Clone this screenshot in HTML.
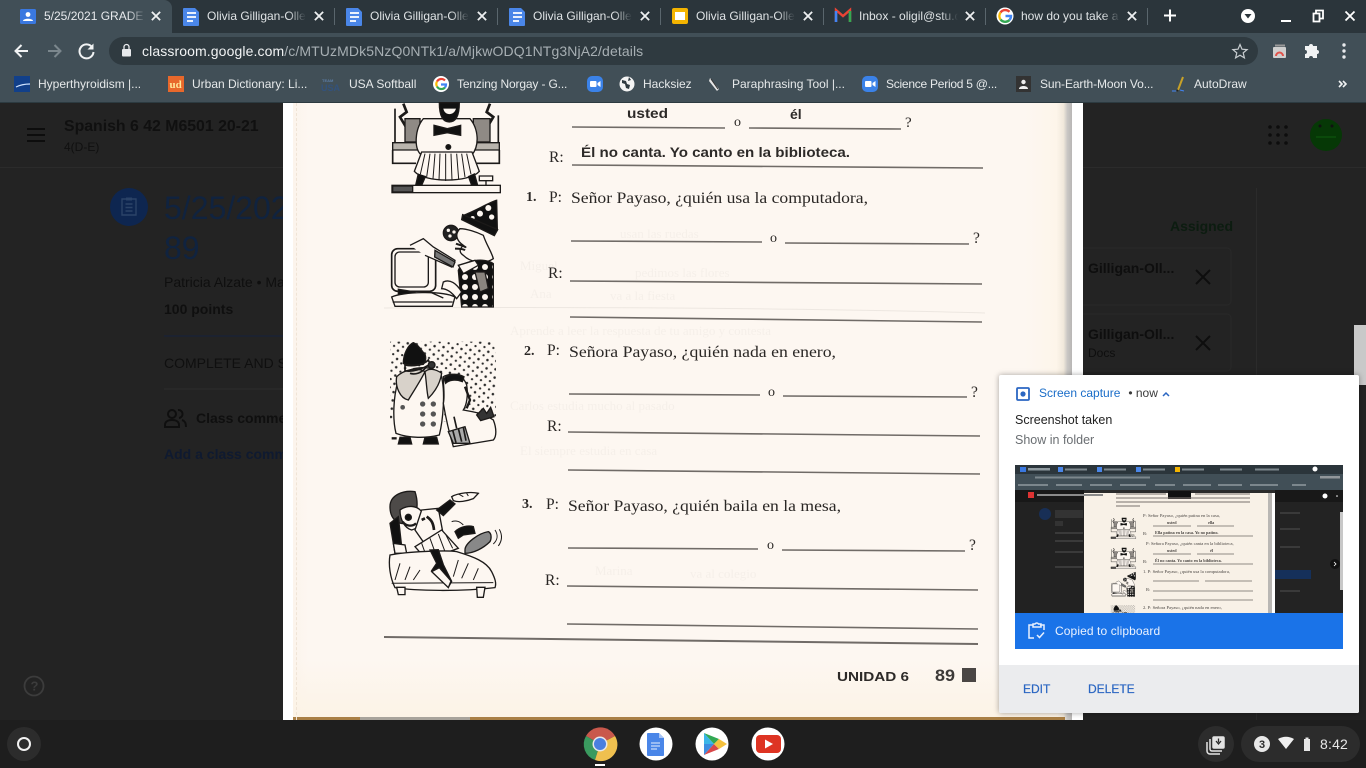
<!DOCTYPE html>
<html lang="en"><head><meta charset="utf-8"><title>Classroom</title>
<style>
*{box-sizing:border-box}
html,body{margin:0;padding:0;width:1366px;height:768px;overflow:hidden;background:#232323;font-family:"Liberation Sans",sans-serif}
.a{position:absolute;white-space:nowrap}
.t{position:absolute;top:9px;font-size:12px;line-height:14px;color:#dfe3e5;white-space:nowrap;overflow:hidden;-webkit-mask-image:linear-gradient(90deg,#000 82%,transparent 100%);mask-image:linear-gradient(90deg,#000 82%,transparent 100%)}
.b{position:absolute;top:77px;font-size:12px;line-height:14px;color:#e6e9ea;white-space:nowrap}
.sep{position:absolute;top:8px;width:1px;height:17px;background:#5a666d}
svg{position:absolute;overflow:visible}
</style></head>
<body>
<!-- browser chrome -->
<div class="a" style="left:0;top:0;width:1366px;height:33px;background:#2b353b"></div>
<div class="a" style="left:0;top:0;width:172px;height:33px;background:#414f57;border-radius:0 8px 0 0"></div>
<div class="a" style="left:0;top:33px;width:1366px;height:69px;background:#414f57"></div>
<div class="a" style="left:109px;top:37px;width:1149px;height:28px;background:#2f3a40;border-radius:14px"></div>

<svg style="left:0;top:0" width="1366" height="102" viewBox="0 0 1366 102">
 <rect x="20" y="9" width="16" height="15" rx="1.5" fill="#3a78e0"/><circle cx="28" cy="14.5" r="2.4" fill="#fff"/><path d="M23 21c0-3 10-3 10 0z" fill="#fff"/>
 <path d="M184 8h11l4 4v13a1 1 0 0 1-1 1h-14a1 1 0 0 1-1-1V9a1 1 0 0 1 1-1z" fill="#4a86e8"/><path d="M187 13h9M187 17h9M187 21h6" stroke="#fff" stroke-width="1.7"/>
 <g transform="translate(163 0)"><path d="M184 8h11l4 4v13a1 1 0 0 1-1 1h-14a1 1 0 0 1-1-1V9a1 1 0 0 1 1-1z" fill="#4a86e8"/><path d="M187 13h9M187 17h9M187 21h6" stroke="#fff" stroke-width="1.7"/></g>
 <g transform="translate(326 0)"><path d="M184 8h11l4 4v13a1 1 0 0 1-1 1h-14a1 1 0 0 1-1-1V9a1 1 0 0 1 1-1z" fill="#4a86e8"/><path d="M187 13h9M187 17h9M187 21h6" stroke="#fff" stroke-width="1.7"/></g>
 <rect x="672" y="8" width="16" height="16" rx="2" fill="#f4b400"/><rect x="675" y="12" width="10" height="8" fill="#fff"/>
 <path d="M836 22V10l7 6 7-6v12" fill="none" stroke="#ea4335" stroke-width="2.4"/><path d="M836 22V11" stroke="#4285f4" stroke-width="2.6"/><path d="M850 22V11" stroke="#34a853" stroke-width="2.6"/>
 <circle cx="1005" cy="16" r="8.500" fill="#fff"/>
 <g fill="none" stroke-width="2.400"><path d="M1009.500 11.800a6 6 0 0 0-9 .7" stroke="#ea4335"/><path d="M1000.500 12.500a6 6 0 0 0 0 7" stroke="#fbbc05"/><path d="M1000.500 19.500a6 6 0 0 0 9 .5" stroke="#34a853"/><path d="M1009.500 20a6 6 0 0 0 1.500-4h-5.500" stroke="#4285f4"/></g>
 <g stroke="#eef0f1" stroke-width="1.800" fill="none" stroke-linecap="square">
  <path d="M152.500 12.500l7 7M159.500 12.500l-7 7"/><path d="M315.500 12.500l7 7M322.500 12.500l-7 7"/><path d="M478.500 12.500l7 7M485.500 12.500l-7 7"/><path d="M641.500 12.500l7 7M648.500 12.500l-7 7"/><path d="M804.500 12.500l7 7M811.500 12.500l-7 7"/><path d="M966.500 12.500l7 7M973.500 12.500l-7 7"/><path d="M1128.500 12.500l7 7M1135.500 12.500l-7 7"/>
 </g>
 <path d="M1170 9.500v12M1164 15.500h12" stroke="#fff" stroke-width="2"/>
 <circle cx="1248" cy="16" r="7" fill="#fff"/><path d="M1244.500 14h7l-3.500 4.500z" fill="#2b353b"/>
 <path d="M1281 21h10" stroke="#fff" stroke-width="2"/>
 <path d="M1313.500 13.500h6v8h-6zM1316 13v-2.500h7v8h-3" fill="none" stroke="#fff" stroke-width="1.800"/>
 <path d="M1345.500 11.500l9 9M1354.500 11.500l-9 9" stroke="#fff" stroke-width="1.800"/>
 <path d="M28 51H16M21.500 45l-6 6 6 6" fill="none" stroke="#f1f3f4" stroke-width="2"/>
 <path d="M48 51h12M54.500 45l6 6-6 6" fill="none" stroke="#7b878d" stroke-width="2"/>
 <path d="M92 47a7 7 0 1 0 1.500 5" fill="none" stroke="#f1f3f4" stroke-width="2"/><path d="M93.500 43.500v6h-6z" fill="#f1f3f4"/>
 <rect x="122" y="49" width="9" height="7.500" rx="1" fill="#e8eaed"/><path d="M124 49v-2a2.500 2.500 0 0 1 5 0v2" fill="none" stroke="#e8eaed" stroke-width="1.300"/>
 <path d="M1240 44.500l2 4.700 5.100.4-3.900 3.300 1.200 5-4.400-2.700-4.400 2.700 1.200-5-3.900-3.300 5.100-.4z" fill="none" stroke="#c8cdd0" stroke-width="1.200"/>
 <rect x="1273" y="47" width="13" height="11" rx="1" fill="#cfcfcf"/><rect x="1275" y="44.500" width="10" height="2" fill="#9a9a9a"/><path d="M1276 56a3.500 3.500 0 0 1 7 0" fill="none" stroke="#e0524a" stroke-width="2"/>
 <path d="M1305 47h4a2 2 0 0 1 4 0h4v4a2 2 0 0 1 0 4v4h-4a2 2 0 0 0-4 0h-4v-4a2 2 0 0 0 0-4z" fill="#f1f3f4" transform="translate(0 -1)"/>
 <g fill="#e8eaed"><circle cx="1344" cy="45" r="1.700"/><circle cx="1344" cy="51" r="1.700"/><circle cx="1344" cy="57" r="1.700"/></g>
 <rect x="14" y="76" width="16" height="16" fill="#12408a"/><path d="M16 87c4-2 8-3 14-3" stroke="#cfe3ff" stroke-width="1.200" fill="none"/>
 <rect x="168" y="76" width="16" height="16" fill="#e8682b"/><text x="169.500" y="88" font-family="Liberation Serif" font-weight="700" font-size="11" fill="#ffe79a">ud</text>
 <text x="322" y="82" font-size="4" fill="#5c7ea8" font-weight="700">TEAM</text><text x="321" y="91" font-size="9" font-weight="700" fill="#33527c">USA</text>
 <circle cx="441" cy="84" r="8" fill="#fff"/><g fill="none" stroke-width="2.200"><path d="M445 80.500a5 5 0 0 0-8 1" stroke="#ea4335"/><path d="M437 81.500a5 5 0 0 0 0 5" stroke="#fbbc05"/><path d="M437 86.500a5 5 0 0 0 8 1" stroke="#34a853"/><path d="M445 87.500a5 5 0 0 0 1-3h-5" stroke="#4285f4"/></g>
 <rect x="587" y="76" width="16" height="16" rx="5" fill="#3b82e8"/><rect x="590" y="81" width="6.500" height="6" rx="1" fill="#fff"/><path d="M597.500 83l3-2v6l-3-2z" fill="#fff"/>
 <circle cx="627" cy="84" r="7.500" fill="#f4f4f4"/><path d="M622 80l4 1 1 3 3 1-1 4-3-1-1-4-3-1zM629 77l2 3-3 1z" fill="#2f3a40"/>
 <path d="M710 78l9 11-2 2-8-10z" fill="#e6e6e6"/><path d="M711 79l7 10" stroke="#333" stroke-width="1"/>
 <rect x="862" y="76" width="16" height="16" rx="5" fill="#3b82e8"/><rect x="865" y="81" width="6.500" height="6" rx="1" fill="#fff"/><path d="M872.500 83l3-2v6l-3-2z" fill="#fff"/>
 <rect x="1016" y="76" width="15" height="16" fill="#333"/><circle cx="1023.500" cy="82" r="2.200" fill="#eee"/><path d="M1019 89c0-4 9-4 9 0z" fill="#eee"/>
 <path d="M1178 90l5-13" stroke="#c9a227" stroke-width="2"/><path d="M1172 91h4M1180 90l4 1" stroke="#4285f4" stroke-width="1"/><path d="M1177 91l1-1" stroke="#222" stroke-width="2"/>
 <path d="M1339 81l3 3-3 3M1343 81l3 3-3 3" fill="none" stroke="#f1f3f4" stroke-width="1.600"/>
</svg>
<div class="t" style="left:44px;width:102px;color:#e8eaed">5/25/2021 GRADE GRADE</div>
<div class="t" style="left:207px;width:99px">Olivia Gilligan-Ollero</div>
<div class="t" style="left:370px;width:99px">Olivia Gilligan-Ollero</div>
<div class="t" style="left:533px;width:99px">Olivia Gilligan-Ollero</div>
<div class="t" style="left:696px;width:99px">Olivia Gilligan-Ollero</div>
<div class="t" style="left:859px;width:99px">Inbox - oligil@stu.com</div>
<div class="t" style="left:1021px;width:99px">how do you take a screenshot</div>
<div class="sep" style="left:334px"></div><div class="sep" style="left:497px"></div><div class="sep" style="left:660px"></div><div class="sep" style="left:823px"></div><div class="sep" style="left:985px"></div><div class="sep" style="left:1147px"></div>
<div class="a" style="left:142px;top:43px;font-size:14px;line-height:16px;color:#f1f3f4;letter-spacing:.11px">classroom.google.com<span style="color:#a7afb3">/c/MTUzMDk5NzQ0NTk1/a/MjkwODQ1NTg3NjA2/details</span></div>
<div class="b" style="left:38px">Hyperthyroidism |...</div>
<div class="b" style="left:192px">Urban Dictionary: Li...</div>
<div class="b" style="left:349px">USA Softball</div>
<div class="b" style="left:457px;letter-spacing:-.15px">Tenzing Norgay - G...</div>
<div class="b" style="left:643px">Hacksiez</div>
<div class="b" style="left:732px">Paraphrasing Tool |...</div>
<div class="b" style="left:886px;letter-spacing:-.25px">Science Period 5 @...</div>
<div class="b" style="left:1040px;letter-spacing:-.1px">Sun-Earth-Moon Vo...</div>
<div class="b" style="left:1194px">AutoDraw</div>

<!-- dimmed classroom -->
<div class="a" style="left:0;top:102px;width:1366px;height:618px;background:#232323"></div>
<div class="a" style="left:0;top:102px;width:1366px;height:1px;background:#2c3a40"></div>
<div class="a" style="left:0;top:167px;width:1366px;height:1px;background:#2b2b2b"></div>
<div class="a" style="left:1256px;top:188px;width:1px;height:532px;background:#2b2b2b"></div>
<svg style="left:0;top:102px" width="1366" height="618" viewBox="0 102 1366 618">
 <path d="M27 129h18M27 135h18M27 141h18" stroke="#0d0d0d" stroke-width="2"/>
 <circle cx="129" cy="207" r="19" fill="#0e2650"/>
 <path d="M122 199h14v16h-14zM125.500 204h7M125.500 207.500h7M125.500 211h7" fill="none" stroke="#2b4368" stroke-width="1.400"/><rect x="126" y="197.500" width="6" height="3" fill="#2b4368"/>
 <path d="M164 336h119" stroke="#16203e" stroke-width="1"/><path d="M164 389h119" stroke="#2c2c2c"/>
 <g fill="none" stroke="#0f0f0f" stroke-width="2"><circle cx="172" cy="414" r="4"/><path d="M165 427v-2c0-4 4-5 7-5s7 1 7 5v2zM178 410a4 4 0 0 1 1 8M182 420c3 1 4 3 4 7"/></g>
 <g fill="#0d0d0d"><circle cx="1270" cy="127" r="1.800"/><circle cx="1278" cy="127" r="1.800"/><circle cx="1286" cy="127" r="1.800"/><circle cx="1270" cy="135" r="1.800"/><circle cx="1278" cy="135" r="1.800"/><circle cx="1286" cy="135" r="1.800"/><circle cx="1270" cy="143" r="1.800"/><circle cx="1278" cy="143" r="1.800"/><circle cx="1286" cy="143" r="1.800"/></g>
 <circle cx="1326" cy="135" r="16" fill="#063806"/><circle cx="1320" cy="126" r="1.500" fill="#111"/><circle cx="1332" cy="126" r="1.500" fill="#111"/><path d="M1316 137h20" stroke="#0a4a0a" stroke-width="2"/>
 <rect x="1070" y="248" width="161" height="57" rx="4" fill="none" stroke="#292929"/>
 <rect x="1070" y="314" width="161" height="57" rx="4" fill="none" stroke="#292929"/>
 <path d="M1196 270l14 14M1210 270l-14 14M1196 336l14 14M1210 336l-14 14" stroke="#0e0e0e" stroke-width="2"/>
 <circle cx="34" cy="686" r="9.500" fill="none" stroke="#3c3c3c" stroke-width="1.800"/>
 <text x="30.500" y="690.500" font-size="13" font-weight="700" fill="#3c3c3c">?</text>
 <rect x="1354" y="325" width="12" height="60" fill="#c9c9c9"/>
</svg>
<div class="a" style="left:64px;top:118px;font-size:16px;line-height:18px;font-weight:700;color:#101010;transform:scaleX(.99);transform-origin:0 0">Spanish 6 42 M6501 20-21</div>
<div class="a" style="left:64px;top:140px;font-size:12px;line-height:14px;color:#101010">4(D-E)</div>
<div class="a" style="left:164px;top:190px;font-size:32px;line-height:36px;color:#10233f">5/25/2021</div>
<div class="a" style="left:164px;top:230px;font-size:32px;line-height:36px;color:#10233f">89</div>
<div class="a" style="left:164px;top:274px;font-size:14px;line-height:16px;color:#0f0f0f">Patricia Alzate • May 25</div>
<div class="a" style="left:164px;top:301px;font-size:14px;line-height:16px;font-weight:700;color:#0f0f0f">100 points</div>
<div class="a" style="left:164px;top:355px;font-size:14px;line-height:16px;color:#0f0f0f">COMPLETE AND SUBMIT</div>
<div class="a" style="left:196px;top:410px;font-size:14px;line-height:16px;font-weight:700;color:#0f0f0f">Class comments</div>
<div class="a" style="left:164px;top:446px;font-size:14px;line-height:16px;font-weight:700;color:#0f1a30">Add a class comment</div>
<div class="a" style="left:1170px;top:217px;font-size:14px;line-height:18px;font-weight:700;color:#0c1c10">Assigned</div>
<div class="a" style="left:1088px;top:260px;font-size:14px;line-height:16px;font-weight:700;color:#0e0e0e">Gilligan-Oll...</div>
<div class="a" style="left:1088px;top:326px;font-size:14px;line-height:16px;font-weight:700;color:#0e0e0e">Gilligan-Oll...</div>
<div class="a" style="left:1088px;top:346px;font-size:12px;line-height:14px;color:#0e0e0e">Docs</div>

<!-- document page -->
<div class="a" style="left:283px;top:103px;width:800px;height:617px;background:#fff"></div>
<div class="a" style="left:293px;top:103px;width:779px;height:617px;background:linear-gradient(90deg,#fcf4ec 0,#fdf7f1 2%,#fdf7f1 94%,#fdf5ea 98%,#f1e9dc 98.9%,#c9c7c4 99.4%,#b8b6b5 100%)"></div>
<div class="a" style="left:293px;top:660px;width:764px;height:57px;background:linear-gradient(180deg,transparent,#fcf3e6)"></div>
<div class="a" style="left:293px;top:717px;width:772px;height:3px;background:#a97f45"></div>
<div class="a" style="left:360px;top:717px;width:110px;height:3px;background:#a8a39b"></div>
<div class="a" style="left:296px;top:103px;width:0;height:617px;border-left:1px dashed #f0e4d6"></div>

<svg style="left:283px;top:103px" width="800" height="617" viewBox="283 103 800 617">
 <defs>
  <pattern id="snow" width="27" height="25" patternUnits="userSpaceOnUse" patternTransform="rotate(6)"><circle cx="6" cy="6" r="3.800" fill="#2a2a2a"/><circle cx="20" cy="18" r="3.400" fill="#2a2a2a"/></pattern>
  <pattern id="pd" width="30" height="30" patternUnits="userSpaceOnUse"><rect width="30" height="30" fill="#111"/><circle cx="15" cy="15" r="9" fill="#fdf7f1"/></pattern>
 </defs>
 <!-- faint bleed-through -->
 <g font-family="Liberation Serif" font-size="13" fill="#9a938a" opacity=".07">
  <text x="520" y="270">Miguel</text><text x="620" y="238">usan las ruedas</text><text x="635" y="277">pedimos las flores</text>
  <text x="530" y="298">Ana</text><text x="610" y="300">va a la fiesta</text><text x="510" y="335">Aprende a leer la respuesta de tu amigo y contesta</text>
  <text x="510" y="410">Carlos estudia mucho al pasado</text><text x="520" y="455">El siempre estudia en casa</text><text x="595" y="575">Marina</text><text x="690" y="578">va al colegio</text>
 </g>
 <path d="M384 308C640 306 880 310 985 313" stroke="#b8b0a8" stroke-width="1" fill="none" opacity=".22"/>
 <!-- lines -->
 <g stroke="#706b67" fill="none" stroke-width="1.600">
  <path d="M572 127l153 1M749 128l152 1M572 165l411 3"/>
  <path d="M571 241l191 1M785 243l184 1M570 281l412 3M570 317l412 5"/>
  <path d="M569 394l191 1M783 396l184 1M568 432l412 4M568 470l412 4"/>
  <path d="M568 548l190 1M782 550l183 1M567 586l411 4M567 624l411 5"/>
  <path d="M384 637l594 7" stroke-width="2"/>
 </g>
 <!-- print text -->
 <g font-family="Liberation Serif" font-size="15.500" fill="#2a2725">
  <text x="734" y="126" font-size="14">o</text><text x="905" y="127" font-size="15">?</text>
  <text x="549" y="162">R:</text>
  <text x="526" y="201" font-weight="700" font-size="14">1.</text><text x="549" y="202">P:</text><text x="571" y="203" textLength="297" lengthAdjust="spacingAndGlyphs">Señor Payaso, ¿quién usa la computadora,</text>
  <text x="770" y="242" font-size="14">o</text><text x="973" y="243">?</text><text x="548" y="278">R:</text>
  <text x="524" y="355" font-weight="700" font-size="14">2.</text><text x="547" y="355">P:</text><text x="569" y="357" textLength="267" lengthAdjust="spacingAndGlyphs">Señora Payaso, ¿quién nada en enero,</text>
  <text x="768" y="396" font-size="14">o</text><text x="971" y="397">?</text><text x="547" y="431">R:</text>
  <text x="522" y="508" font-weight="700" font-size="14">3.</text><text x="546" y="509">P:</text><text x="568" y="511" textLength="273" lengthAdjust="spacingAndGlyphs">Señor Payaso, ¿quién baila en la mesa,</text>
  <text x="767" y="549" font-size="14">o</text><text x="969" y="550">?</text><text x="545" y="585">R:</text>
  <text x="935" y="681" font-family="Liberation Sans" font-size="17" font-weight="700" fill="#3d3a38" textLength="20" lengthAdjust="spacingAndGlyphs">89</text>
 </g>
 <g font-family="Liberation Sans" font-weight="700" fill="#2d2a28">
  <text x="627" y="118" font-size="14" textLength="41" lengthAdjust="spacingAndGlyphs">usted</text><text x="790" y="119" font-size="14">él</text>
  <text x="581" y="157" font-size="13.500" textLength="269" lengthAdjust="spacingAndGlyphs">Él no canta. Yo canto en la biblioteca.</text>
  <text x="837" y="681" font-size="12.500" textLength="72" lengthAdjust="spacingAndGlyphs">UNIDAD 6</text>
 </g>
 <rect x="962" y="668" width="14" height="14" fill="#4a4644"/>

 <!-- clown 0 -->
 <g id="c0" transform="translate(380 102) scale(.3333)" fill="none" stroke="#1c1a19" stroke-width="4">
  <path d="M45 130V20M355 130V40" stroke-width="5"/>
  <path d="M70 5l10 25-20 15 18 30 25-15M330 5l-10 25 20 15-18 30-25-15" stroke-width="8"/>
  <rect x="75" y="50" width="45" height="70" fill="#8f8a85"/><rect x="280" y="50" width="50" height="70" fill="#8f8a85"/>
  <path d="M38 122h320v22H38z" fill="#b9b4ad"/><path d="M38 144v40h70M358 144v40h-70" stroke-width="5"/>
  <path d="M130 50c-25 30-30 90 -5 110h150c25-30 20-80-5-110z" fill="#fdf7f1"/>
  <path d="M178 2c0 40 10 58 30 58s30-20 30-58z" fill="#111"/><path d="M190 20c4 22 32 22 38 0z" fill="#fdf7f1" stroke="none"/>
  <path d="M162 70l40 10 40-10v30l-40-8-40 8z" fill="#111"/><circle cx="205" cy="135" r="7" fill="#111"/>
  <path d="M125 150l-22 58c30 35 165 35 195 0l-22-58z" fill="#fdf7f1"/>
  <path d="M135 155l-14 62M150 155l-10 70M165 155l-6 75M180 155l-3 80M197 155v82M213 155l3 80M230 155l6 76M245 155l10 70M260 155l13 62" stroke-width="3"/>
  <path d="M115 215l-8 35h18l12-28M265 222l10 28h18l-10-36" fill="#111"/>
  <rect x="36" y="250" width="325" height="22" fill="#fdf7f1"/><rect x="38" y="252" width="60" height="18" fill="#555"/>
  <path d="M298 222h40v14h-40zM318 236v14" stroke-width="4"/>
 </g>
 <!-- clown 1 -->
 <g id="c1" transform="translate(380 102) scale(.3333)" fill="none" stroke="#1c1a19" stroke-width="4">
  <path d="M250 340c30-10 80-40 100-45l2 85c-30-5-70-20-102-40z" fill="#111"/>
  <g fill="#fdf7f1" stroke="none"><circle cx="300" cy="335" r="9"/><circle cx="325" cy="318" r="9"/><circle cx="335" cy="345" r="8"/><circle cx="278" cy="348" r="6"/></g>
  <path d="M248 338l105 45-10 18-98-48z" fill="#111"/>
  <circle cx="213" cy="393" r="23" fill="#222"/><g fill="#fdf7f1" stroke="none"><circle cx="205" cy="385" r="5"/><circle cx="222" cy="390" r="5"/><circle cx="210" cy="402" r="5"/></g>
  <path d="M240 380c20 0 50 10 70 20 10 30 25 50 30 70-30 20-70 10-90-10-15-10-10-20 0-30-15-10-30-30-10-50z" fill="#fdf7f1"/>
  <path d="M228 425c10 5 25 5 30 12M225 440c10 0 25 0 30 5" stroke-width="6"/>
  <path d="M235 505c10-30 80-40 105-20v130H245z" fill="url(#pd)"/>
  <path d="M285 510l30 0 10 50-25 10z" fill="#8a857f"/>
  <path d="M235 490l50-15 10 15-45 25z" fill="#fdf7f1"/>
  <rect x="35" y="440" width="132" height="128" rx="18" fill="#fdf7f1" stroke-width="5"/><rect x="45" y="450" width="100" height="105" rx="14"/>
  <path d="M90 430l40-20 30 25 65 40-10 20-80-35" fill="#fdf7f1"/><path d="M165 445l60 35-6 15-55-30z" fill="#777"/>
  <path d="M55 562l50 8v12H55z" fill="#111"/>
  <path d="M35 585c30-15 150-20 190 0l-8 28H45z" fill="#fdf7f1"/><path d="M150 570l40 18M38 600h180"/>
  <path d="M190 540c20-10 40 5 55 30l-15 20c-15-20-30-30-45-30z" fill="#fdf7f1"/>
 </g>
 <!-- clown 2 -->
 <g id="c2" transform="translate(380 330) scale(.3333)" fill="none" stroke="#1c1a19" stroke-width="4">
  <rect x="30" y="35" width="318" height="240" fill="url(#snow)" stroke="none"/>
  <path d="M58 140c-20 60-20 130-10 170 40 15 90 15 130 5 10-40 20-130 5-180-20-30-90-30-125 5z" fill="#fdf7f1"/>
  <path d="M50 140c20-20 60-30 85-15-15 30-35 60-50 85-25-5-40-40-35-70zM185 130c-20-15-40-15-50-5 5 35 5 60 10 80 15-15 35-40 40-75z" fill="#d8d2ca"/>
  <g fill="#555" stroke="none"><circle cx="128" cy="222" r="8"/><circle cx="160" cy="222" r="8"/><circle cx="128" cy="252" r="8"/><circle cx="160" cy="252" r="8"/><circle cx="128" cy="282" r="8"/><circle cx="160" cy="282" r="8"/><circle cx="68" cy="232" r="7"/></g>
  <path d="M70 100c0-30 15-55 30-62 15 5 25 25 35 35 5 12 0 25-5 30-20 2-50 5-60-3z" fill="#111"/>
  <path d="M75 105c25 5 55 0 70-15l5 12c-20 15-55 25-75 20zM90 130c15 5 35 0 50-20" stroke-width="5"/>
  <circle cx="155" cy="105" r="10" fill="#333"/>
  <path d="M60 322h30l5 20H55zM135 322h35l5 20h-45z" fill="#111"/><path d="M35 325h15" stroke-width="7"/>
  <path d="M190 140c30-15 60-5 70 25 5 30 0 60-10 75 30 5 60 10 90 30 10 25 10 50 0 60l-120 20c-15-50-25-100-30-130 5-20 0-50 0-80z" fill="#fdf7f1"/>
  <path d="M192 145c15-15 40-15 60-5l-5 15c-20-8-40-5-50 5z" fill="#111"/>
  <path d="M255 170l15 40 -10 25" stroke-width="7"/>
  <path d="M290 255l20-20 10 15 12-18 10 28-40 12z" fill="#333"/>
  <path d="M205 305l50-15 15 50h-50z" fill="#aaa"/><path d="M218 300l10 38M235 295l10 40M250 292l8 40M230 295l-8-35" stroke-width="5"/>
 </g>
 <!-- clown 3 -->
 <g transform="translate(380 330) scale(.3333)" fill="none" stroke="#1c1a19" stroke-width="4">
  <path d="M30 530c0-35 40-50 75-45 10 30 10 70-15 90-25 15-60 0-60-45z" fill="#4d4a48"/>
  <path d="M60 540c20-15 50-15 65 5 5 30-10 50-30 55-20-5-35-30-35-60z" fill="#fdf7f1"/>
  <circle cx="85" cy="562" r="9" fill="#111"/><path d="M68 575c10 15 30 15 40 5" stroke-width="7"/>
  <path d="M125 540l50-5 15 80-50 35-35-50z" fill="#fdf7f1"/>
  <path d="M170 540l40-30 15 12-35 35z" fill="#111"/>
  <path d="M215 500c20-12 60-15 80-10l-15 16c-20 8-45 12-60 6z" fill="#fdf7f1"/><path d="M235 492l15 8M260 490l5 8" stroke-width="3"/>
  <path d="M30 580l25-20 10 90-20 20z" fill="#111"/>
  <path d="M40 640l35 5 5 25-35 0z" fill="#fdf7f1"/>
  <path d="M105 650l80-50 50 55-95 35z" fill="#fdf7f1"/><path d="M125 640l18 50M150 625l20 55M175 612l22 58M198 615l20 40" stroke-width="3"/>
  <path d="M140 560c15 10 20 20 22 40M125 570l10-5" stroke-width="8"/>
  <path d="M225 605c15-15 40-20 55-15l5 20-35 5-15 10z" fill="#111"/>
  <path d="M255 660c0-20 40-50 70-55 10 5 10 20 5 30-20 20-50 35-75 35z" fill="#888"/>
  <path d="M345 600c10 15 8 30-5 42M358 598c10 18 8 35-3 50M215 575c15-5 25 0 35 10" stroke-width="3"/>
  <path d="M30 675c50-10 170-15 200-10 50 15 90 30 105 60 10 20 15 35 10 48-100 12-240 10-300 0-15-30-20-70-15-98z" fill="#fdf7f1"/>
  <path d="M60 700l-15 50M90 710l-15 40M120 720l-20 30M235 690l-15 50M265 700l-20 45M295 715l-15 35M35 760l305-2" stroke-width="3"/>
  <path d="M150 660l20 40-15 22 50 50 10-18-25-50-15-45z" fill="#111"/><path d="M155 725l50 48 8-20-35-40z" fill="#fdf7f1"/>
  <path d="M50 772h25v22H55zM290 772h25l-5 30h-18z" fill="#fdf7f1"/>
 </g>
</svg>

<!-- shelf -->
<div class="a" style="left:0;top:720px;width:1366px;height:48px;background:#1e1e1e"></div>
<svg style="left:0;top:720px" width="1366" height="48" viewBox="0 720 1366 48">
 <circle cx="24" cy="744" r="17" fill="#2c2c2c"/><circle cx="24" cy="744" r="6" fill="none" stroke="#f1f1f1" stroke-width="2"/>
 <path d="M600 744L586 736a16.500 16.500 0 0 1 29 0z" fill="#c9584c"/><path d="M586 736a16.500 16.500 0 0 0 9 24l5-16z" fill="#3a9a5f"/><path d="M615 736a16.500 16.500 0 0 1-20 24l5-16z" fill="#efc04f"/>
 <circle cx="600" cy="744" r="7.500" fill="#e8e8e8"/><circle cx="600" cy="744" r="6" fill="#4a7fe0"/>
 <rect x="595" y="764" width="10" height="2" fill="#fff"/>
 <circle cx="656" cy="744" r="16.500" fill="#fff"/><path d="M648 733h11l5 5v17a1 1 0 0 1-1 1h-15a1 1 0 0 1-1-1v-21a1 1 0 0 1 1-1z" fill="#4a86e8"/><path d="M659 733l5 5h-5z" fill="#a9c5f5"/><path d="M651 743h9M651 746h9M651 749h6" stroke="#e8f0fe" stroke-width="1"/>
 <circle cx="712" cy="744" r="16.500" fill="#fff"/><path d="M704 733v11h10z" fill="#3bb6e8"/><path d="M704 733l10 11 5-5z" fill="#32a853"/><path d="M704 755v-11h10z" fill="#3c8de0"/><path d="M704 755l10-11 5 5z" fill="#d9484a"/><path d="M719 739l8 5-8 5-5-5z" fill="#f5c13d"/>
 <circle cx="768" cy="744" r="16.500" fill="#fff"/><rect x="756" y="735" width="25" height="18" rx="4" fill="#de3423"/><path d="M765 739.500l8 4.500-8 4.500z" fill="#fff"/>
 <circle cx="1216" cy="744" r="18" fill="#2c2c2c"/>
 <g fill="none" stroke="#e3e3e3" stroke-width="1.500"><rect x="1213" y="737" width="11" height="11" rx="1" fill="#e3e3e3"/><path d="M1210 739v10a2 2 0 0 0 2 2h10M1207 742v9a3 3 0 0 0 3 3h10"/></g><path d="M1218.500 738.500v4M1216 741l2.500 3 2.500-3" fill="none" stroke="#2c2c2c" stroke-width="1.300"/>
 <rect x="1241" y="726" width="119" height="36" rx="18" fill="#2c2c2c"/>
 <circle cx="1262" cy="744" r="8" fill="#e8e8e8"/><text x="1262" y="748" font-size="11" text-anchor="middle" fill="#2c2c2c" font-weight="700">3</text>
 <path d="M1278 739c5-3 11-3 16 0l-8 10z" fill="#efefef"/>
 <path d="M1304 739h1.500v-1.500h3v1.500h1.500v12h-6z" fill="#e6e6e6"/>
</svg>
<div class="a" style="left:1320px;top:736px;font-size:14px;line-height:16px;color:#e8e8e8;letter-spacing:.2px">8:42</div>

<!-- notification -->
<div class="a" style="left:999px;top:375px;width:360px;height:338px;background:#fff;border-radius:2px;box-shadow:0 0 6px rgba(0,0,0,.35)"></div>
<div class="a" style="left:999px;top:665px;width:360px;height:48px;background:#ebecee;border-radius:0 0 2px 2px"></div>
<svg style="left:1016px;top:387px" width="14" height="14" viewBox="0 0 14 14"><rect x="1" y="1" width="12" height="12" rx="1" fill="none" stroke="#2a66c2" stroke-width="1.800"/><circle cx="7" cy="7" r="2.600" fill="#2a66c2"/></svg>
<div class="a" style="left:1039px;top:386px;font-size:12px;line-height:15px;color:#1a6dc8">Screen capture</div>
<div class="a" style="left:1125px;top:386px;font-size:12px;line-height:15px;color:#3a3a3a">&nbsp;• now</div>
<svg style="left:1162px;top:391px" width="8" height="6" viewBox="0 0 8 6"><path d="M1 5l3-3 3 3" fill="none" stroke="#2a66c2" stroke-width="1.500"/></svg>
<div class="a" style="left:1015px;top:413px;font-size:12.500px;line-height:15px;color:#222">Screenshot taken</div>
<div class="a" style="left:1015px;top:433px;font-size:12.500px;line-height:15px;color:#6a6e72">Show in folder</div>

<!-- thumbnail -->
<svg style="left:1015px;top:465px" width="328" height="148" viewBox="1015 465 328 148">
 <rect x="1015" y="465" width="328" height="148" fill="#232323"/>
 <rect x="1015" y="465" width="328" height="25" fill="#414f57"/><rect x="1015" y="465" width="328" height="9" fill="#2b353b"/>
 <rect x="1020" y="467" width="6" height="5" fill="#3a78e0"/><rect x="1028" y="468" width="22" height="2.500" fill="#8f9aa0"/>
 <g fill="#4a86e8"><rect x="1058" y="467" width="5" height="5"/><rect x="1097" y="467" width="5" height="5"/><rect x="1136" y="467" width="5" height="5"/></g><rect x="1175" y="467" width="5" height="5" fill="#f4b400"/>
 <g fill="#7c878d"><rect x="1065" y="468.500" width="22" height="2"/><rect x="1104" y="468.500" width="22" height="2"/><rect x="1143" y="468.500" width="22" height="2"/><rect x="1182" y="468.500" width="22" height="2"/><rect x="1220" y="468.500" width="22" height="2"/><rect x="1255" y="468.500" width="24" height="2"/></g>
 <circle cx="1315" cy="469" r="2.500" fill="#fff"/><rect x="1035" y="476.500" width="115" height="2" fill="#7c878d"/><rect x="1320" y="476" width="20" height="2.500" fill="#c8c8c8" opacity=".6"/>
 <g fill="#7c878d"><rect x="1018" y="484" width="30" height="2"/><rect x="1056" y="484" width="26" height="2"/><rect x="1090" y="484" width="22" height="2"/><rect x="1120" y="484" width="26" height="2"/><rect x="1155" y="484" width="20" height="2"/><rect x="1183" y="484" width="28" height="2"/><rect x="1218" y="484" width="24" height="2"/><rect x="1250" y="484" width="28" height="2"/><rect x="1292" y="484" width="14" height="2"/></g>
 <rect x="1015" y="490" width="69" height="123" fill="#222"/>
 <rect x="1084" y="490" width="191" height="123" fill="#f8f1e7"/><rect x="1268" y="490" width="4" height="123" fill="#b9b7b4"/><rect x="1272" y="490" width="3" height="123" fill="#fff"/>
 <rect x="1015" y="490" width="69" height="12" fill="#181818"/><rect x="1275" y="490" width="68" height="12" fill="#181818"/><rect x="1084" y="490" width="191" height="3" fill="#2a2a2a"/>
 <rect x="1028" y="492" width="6" height="6" fill="#d33"/><rect x="1037" y="494" width="66" height="2" fill="#8a8a8a"/>
 <rect x="1168" y="491" width="23" height="8" fill="#111"/>
 <path d="M1116 494h50M1195 494h55M1116 498h134M1116 502h134M1116 506h24" stroke="#807a74" stroke-width="1.200" opacity=".85"/>
 <circle cx="1325" cy="496" r="2.500" fill="#fff"/><circle cx="1337" cy="496" r=".8" fill="#fff"/>
 <circle cx="1045" cy="514" r="6" fill="#16315f" opacity=".85"/><rect x="1055" y="510" width="28" height="8" fill="#333"/><rect x="1055" y="521" width="8" height="5" fill="#333"/>
 <g fill="#3a3a3a"><rect x="1055" y="532" width="28" height="2"/><rect x="1055" y="540" width="28" height="2"/><rect x="1055" y="551" width="28" height="2"/><rect x="1055" y="566" width="28" height="2"/></g>
 <g fill="#3a3a3a"><rect x="1280" y="512" width="20" height="2"/><rect x="1280" y="528" width="20" height="2"/><rect x="1280" y="546" width="20" height="2"/><rect x="1280" y="590" width="20" height="2"/></g>
 <rect x="1275" y="570" width="36" height="9" fill="#15305a"/>
 <rect x="1340" y="512" width="3" height="78" fill="#c8c8c8"/>
 <circle cx="1335" cy="564" r="5" fill="#111"/><path d="M1334 562l2 2-2 2" stroke="#fff" stroke-width=".8" fill="none"/>
 <!-- mini clowns -->
 <use href="#c0" transform="translate(1020.800 494.300) scale(.23)"/>
 <use href="#c0" transform="translate(1020.800 524.300) scale(.23)"/>
 <use href="#c1" transform="translate(1021.300 526) scale(.23)"/>
 <use href="#c2" transform="translate(1021 526.500) scale(.23)"/>
 <g font-family="Liberation Serif" font-size="4.600" fill="#4a4643">
  <text x="1143" y="517">P: Señor Payaso, ¿quién patina en la casa,</text>
  <text x="1143" y="535">R:</text><text x="1155" y="534" font-weight="700" font-size="4.200">Ella patina en la casa. Yo no patino.</text>
  <text x="1146" y="545">P: Señora Payaso, ¿quién canta en la biblioteca,</text>
  <text x="1143" y="563">R:</text><text x="1155" y="562" font-weight="700" font-size="4.200">Él no canta. Yo canto en la biblioteca.</text>
  <text x="1143" y="573">1. P: Señor Payaso, ¿quién usa la computadora,</text>
  <text x="1146" y="591">R:</text><text x="1143" y="609">2. P: Señora Payaso, ¿quién nada en enero,</text>
  <text x="1167" y="524" font-weight="700" font-size="4.200">usted</text><text x="1208" y="524" font-weight="700" font-size="4.200">ella</text>
  <text x="1167" y="552" font-weight="700" font-size="4.200">usted</text><text x="1210" y="552" font-weight="700" font-size="4.200">él</text>
 </g>
 <g stroke="#6d6864" stroke-width=".8"><path d="M1153 526h38M1197 526h37M1153 536h100M1153 554h38M1197 554h37M1153 564h100M1153 581h46M1205 581h47M1153 591h100M1153 600h100"/></g>
</svg>
<div class="a" style="left:1015px;top:613px;width:328px;height:36px;background:#1a73e8"></div>
<svg style="left:1027px;top:622px" width="20" height="18" viewBox="0 0 20 18"><path d="M6 3H2v13h5M13 3h4v5M6 4V2h2a2 2 0 0 1 3.500 0H14v3H6z" fill="none" stroke="#e8f0fe" stroke-width="1.500"/><path d="M10 13l2.500 2.500L17 10.500" fill="none" stroke="#e8f0fe" stroke-width="1.500"/></svg>
<div class="a" style="left:1055px;top:624px;font-size:12px;line-height:15px;color:#eaf2ff;letter-spacing:.1px">Copied to clipboard</div>
<div class="a" style="left:1023px;top:682px;font-size:12px;line-height:15px;color:#2a66c2;-webkit-text-stroke:.2px #2a66c2">EDIT</div>
<div class="a" style="left:1088px;top:682px;font-size:12px;line-height:15px;color:#2a66c2;-webkit-text-stroke:.2px #2a66c2">DELETE</div>
</body></html>
